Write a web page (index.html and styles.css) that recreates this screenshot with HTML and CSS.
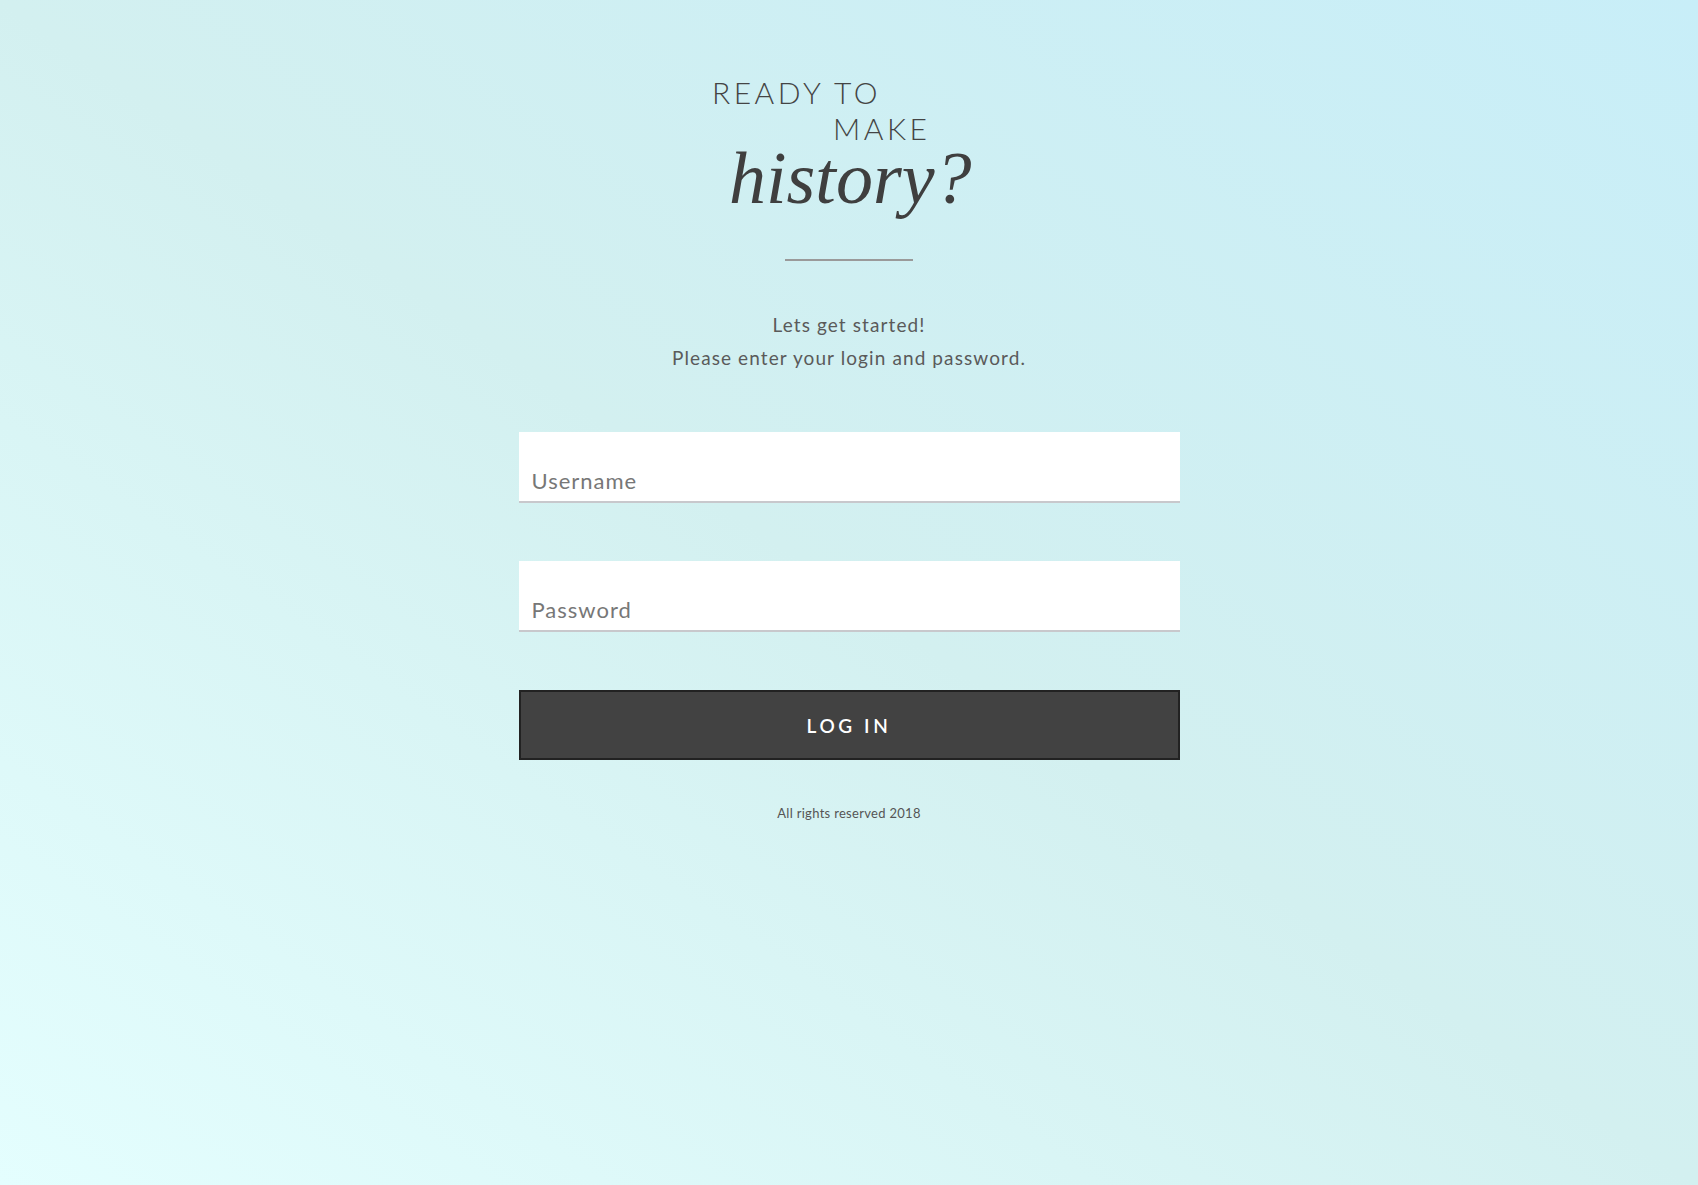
FILE: index.html
```html
<!DOCTYPE html>
<html lang="en">
<head>
<meta charset="utf-8">
<title>Login</title>
<link rel="stylesheet" href="styles.css">
</head>
<body>
<main class="page">
  <div class="logo">
    <div class="logo-ready">READY TO</div>
    <div class="logo-make">MAKE</div>
    <div class="logo-history">history?</div>
  </div>
  <div class="divider"></div>
  <p class="intro">Lets get started!<br>Please enter your login and password.</p>
  <form class="form">
    <input class="field" type="text" placeholder="Username">
    <input class="field" type="password" placeholder="Password">
    <button class="btn" type="button">LOG IN</button>
  </form>
  <p class="footer">All rights reserved 2018</p>
</main>
</body>
</html>
```
FILE: styles.css
```css
html, body {
  margin: 0;
  padding: 0;
  height: 100%;
}
body {
  background: linear-gradient(to top right, #e4fefe 0%, #d3f0f0 50%, #c8eef8 100%);
  font-family: "Lato", "Open Sans", sans-serif;
  color: #555;
}
.page {
  display: flex;
  flex-direction: column;
  align-items: center;
  padding-top: 74px;
}
.logo {
  width: 274px;
  display: flex;
  flex-direction: column;
  color: #444;
}
.logo-ready, .logo-make {
  font-family: "Lato", sans-serif;
  font-weight: 300;
  font-size: 30px;
  line-height: 36px;
  letter-spacing: 3.5px;
}
.logo-make {
  margin-left: 121px;
}
.logo-history {
  font-family: "Liberation Serif", serif;
  font-style: italic;
  font-size: 74px;
  line-height: 64px;
  margin-left: 17px;
  color: #3f3f3f;
}
.divider {
  width: 128px;
  height: 2px;
  background: #9a9a9a;
  margin-top: 49px;
}
.intro {
  margin: 47px 0 0;
  text-align: center;
  font-size: 19px;
  line-height: 33px;
  letter-spacing: 1.1px;
  color: #5a5a5a;
}
.form {
  width: 661px;
  display: flex;
  flex-direction: column;
  margin-top: 58px;
}
.field {
  box-sizing: border-box;
  height: 71px;
  border: none;
  border-bottom: 2px solid #c8c8cc;
  background: #fff;
  padding: 32px 13px 4px;
  font-family: "Lato", sans-serif;
  font-size: 22px;
  letter-spacing: 1px;
  color: #444;
  margin-bottom: 58px;
  outline: none;
}
.field::placeholder {
  color: #777;
}
.btn {
  height: 70px;
  background: #424242;
  border: 2px solid #222;
  color: #fff;
  font-family: "Lato", sans-serif;
  font-size: 19px;
  font-weight: 600;
  letter-spacing: 3.6px;
  cursor: pointer;
}
.footer {
  margin: 45px 0 0;
  font-size: 13px;
  letter-spacing: 0.3px;
  color: #555;
}
```
